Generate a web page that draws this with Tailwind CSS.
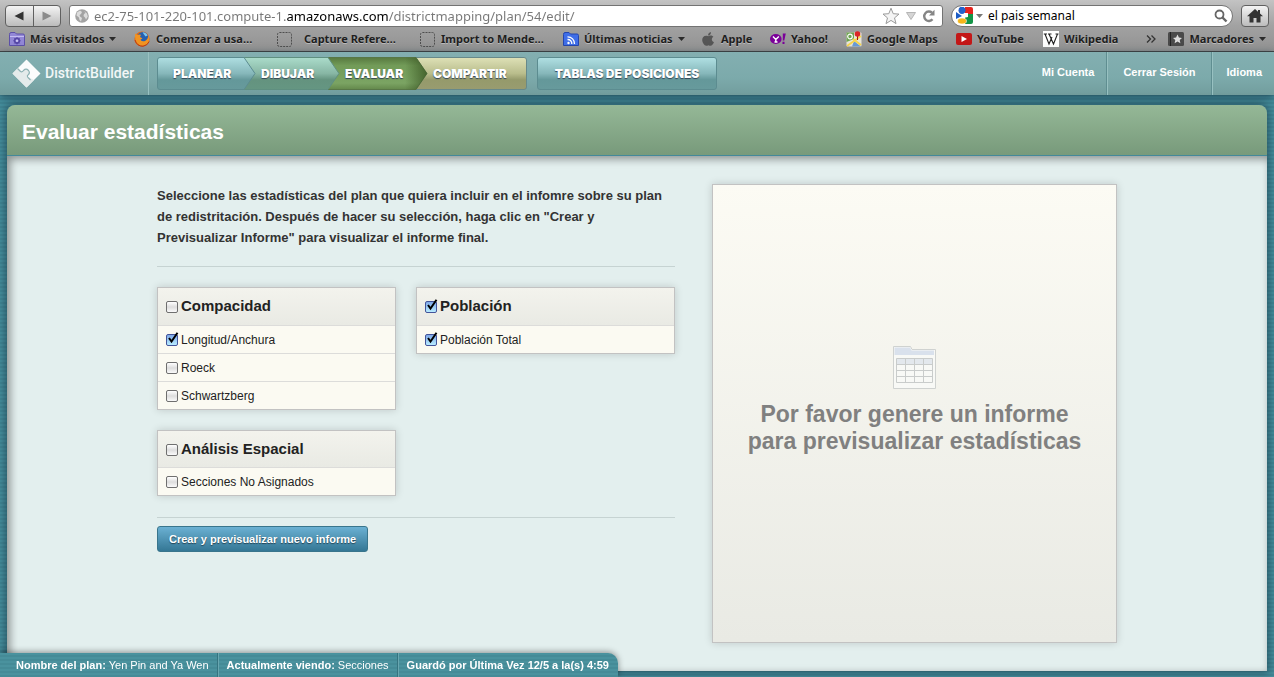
<!DOCTYPE html>
<html lang="es">
<head>
<meta charset="utf-8">
<meta name="viewport" content="width=device-width, initial-scale=1">
<title>DistrictBuilder</title>
<script src="https://cdn.jsdelivr.net/npm/@tailwindcss/browser@4"></script>
</head>
<body class="flex min-h-screen flex-col overflow-x-hidden bg-[#43899a] bg-[repeating-linear-gradient(#468f9d_0_2px,#418694_2px_4px)] font-['Liberation_Sans',Arial,sans-serif] text-[12px] text-[#222]">

<!-- Browser toolbar -->
<div class="border-b border-[#444] bg-linear-to-b from-[#c3c3c3] via-[#a2a2a2] via-50% to-[#929292] font-['Noto_Sans','Lucida_Grande',sans-serif]">
  <div class="flex h-[29px] items-center gap-2 px-[5px] pt-0.5">
    <div class="flex h-[22px] w-14 shrink-0 overflow-hidden rounded-[4px] border border-[#606060] bg-linear-to-b from-[#f4f4f4] to-[#bcbcbc]">
      <button aria-label="Atrás" class="flex flex-1 items-center justify-center border-r border-[#606060]"><svg width="10" height="10" viewBox="0 0 10 10"><path d="M9.500 0.500V9.500L0.500 5z" fill="#333"/></svg></button>
      <button aria-label="Adelante" class="flex flex-1 items-center justify-center"><svg width="10" height="10" viewBox="0 0 10 10"><path d="M.5.5V9.500L9.500 5z" fill="#8b8b8b"/></svg></button>
    </div>
    <div class="flex h-[22px] min-w-0 flex-1 items-center rounded-[3px] border border-[#737373] bg-white pr-1.5 pl-[5px]">
      <svg class="shrink-0" width="14" height="14" viewBox="0 0 14 14"><circle cx="7" cy="7" r="6.800" fill="#a3a3a3"/><path d="M2 3.500 5 1.500 7 3 6 5 4.500 6 5 7.500 7 9 6 12.500 4.500 11 4 8.500 1.500 6.500zM9 2 12 4.500 12.800 7.500 11 10.500 10 8.500 8.500 7 9 5 10.500 4z" fill="#dcdcdc"/></svg>
      <input aria-label="Dirección" value="ec2-75-101-220-101.compute-1.amazonaws.com/districtmapping/plan/54/edit/" class="ml-[5px] h-5 min-w-0 flex-1 bg-[linear-gradient(90deg,#777_192px,#000_192px_295px,#777_295px)] bg-clip-text text-[13px] text-transparent outline-none">
      <svg class="shrink-0" width="18" height="18" viewBox="0 0 18 18"><path d="M9 1.200 11.200 6.700 17 7.100 12.500 10.900 14 16.600 9 13.400 4 16.600 5.500 10.900 1 7.100 6.800 6.700z" fill="#f4f4f4" stroke="#9b9b9b"/></svg>
      <svg class="ml-1.5 shrink-0" width="10" height="8" viewBox="0 0 10 8"><path d="M.5.500H9.500L5 7.500z" fill="#d5d5d5" stroke="#b5b5b5"/></svg>
      <button aria-label="Recargar" class="ml-1.5"><svg width="14" height="14" viewBox="0 0 14 14"><path d="M10.500 10.300A4.700 4.700 0 1 1 10 3.700" fill="none" stroke="#858585" stroke-width="2.400"/><path d="M12.500.8V6.500H7z" fill="#858585"/></svg></button>
    </div>
    <div class="flex h-[22px] w-[282px] shrink-0 items-center rounded-full border border-[#737373] bg-white px-1">
      <svg class="shrink-0" width="17" height="17" viewBox="0 0 17 17"><path d="M9 0H15Q17 0 17 2V7H9z" fill="#e5231d"/><path d="M9 7H17V15Q17 17 15 17H9z" fill="#139547"/><path d="M0 5 6 9 0 12z" fill="#1c5cc4"/><ellipse cx="6" cy="3.300" rx="3.500" ry="3.600" fill="#2462cc"/><path d="M8 6 12 6 12 10 7 11z" fill="#fff"/><ellipse cx="6" cy="14" rx="4.500" ry="3" fill="#f5b61a" stroke="#fff" stroke-width=".6"/></svg>
      <svg class="ml-[3px] shrink-0" width="7" height="4" viewBox="0 0 7 4"><path d="M0 0H7L3.500 4z" fill="#777"/></svg>
      <input aria-label="Buscar" value="el pais semanal" class="ml-[5px] h-5 min-w-0 flex-1 text-[12px] text-black outline-none">
      <svg class="shrink-0" width="14" height="14" viewBox="0 0 14 14"><circle cx="5.500" cy="5.500" r="4" fill="none" stroke="#666" stroke-width="1.800"/><path d="M8.500 8.500 12.500 12.500" stroke="#666" stroke-width="2.400"/></svg>
    </div>
    <button aria-label="Inicio" class="flex h-[22px] w-7 shrink-0 items-center justify-center rounded-[4px] border border-[#606060] bg-linear-to-b from-[#f4f4f4] to-[#bcbcbc]"><svg width="16" height="14" viewBox="0 0 16 14"><path d="M8 0 11 2.700V1H13V4.500L16 7.300H13.500V13.500H9.500V9H6.500V13.500H2.500V7.300H0z" fill="#333"/></svg></button>
  </div>

  <nav aria-label="Marcadores" class="grid h-[22px] grid-cols-[125px_143px_143px_143px_139px_68px_76px_110px_87px_1fr_auto] items-center overflow-hidden pr-2 pb-0.5 pl-[9px] text-[11px] font-bold whitespace-nowrap text-[#1e1e1e] text-shadow-[0_1px_0_#bbb]">
    <a href="#" class="flex items-center gap-[5px]"><svg width="16" height="14" viewBox="0 0 16 14"><path d="M.5 2.500Q.5.500 2 .5H6L7.500 2H14Q15.500 2 15.500 3.500V13.500H.5z" fill="#9287d6" stroke="#5c50a8"/><path d="M1 4.500H15" stroke="#c5bdf2"/><circle cx="8" cy="8.800" r="2.300" fill="none" stroke="#5546a5" stroke-width="1.600"/><path d="M8 5V12.600M4.200 8.800H11.800M5.300 6.100 10.700 11.500M10.700 6.100 5.300 11.500" stroke="#5546a5" stroke-width=".9"/><circle cx="8" cy="8.800" r="1.300" fill="#c9c2f4"/></svg>Más visitados<svg width="7" height="4" viewBox="0 0 7 4"><path d="M0 0H7L3.500 4z" fill="#2a2a2a"/></svg></a>
    <a href="#" class="flex items-center gap-1.5"><svg width="16" height="16" viewBox="0 0 16 16"><circle cx="8" cy="8" r="7.600" fill="#e06a18"/><circle cx="8.800" cy="6.300" r="5.400" fill="#2560b0"/><path d="M8.500 1.200Q12 1.200 13.600 4.500L11.500 5.500 10 3.500z" fill="#7cc6f0"/><path d="M1.200 2.500 3.500 4Q5 3.200 7 3.800L6 6 8.500 7.200 6.500 8.800Q8 11 11 10 14 8.500 14.200 4.500 16.500 9.500 13 13 8 16.500 3.500 13 .2 9.500 1.200 2.500z" fill="#f29422"/><path d="M1 9Q3 15.300 9 15.300 13.500 14.500 15.200 10.500" fill="none" stroke="#bb3c14"/></svg>Comenzar a usa…</a>
    <a href="#" class="flex items-center gap-3"><svg width="15" height="15" viewBox="0 0 15 15"><rect x=".5" y=".5" width="14" height="14" rx="2" fill="none" stroke="#4e4e4e" stroke-dasharray="2 1"/></svg>Capture Refere…</a>
    <a href="#" class="flex items-center gap-1.5"><svg width="15" height="15" viewBox="0 0 15 15"><rect x=".5" y=".5" width="14" height="14" rx="2" fill="none" stroke="#4e4e4e" stroke-dasharray="2 1"/></svg>Import to Mende…</a>
    <a href="#" class="flex items-center gap-[5px]"><svg width="16" height="14" viewBox="0 0 16 14"><path d="M.5 2.500Q.5.500 2 .5H6L7.500 2H14Q15.500 2 15.500 3.500V13.500H.5z" fill="#3f6ee8" stroke="#2446ae"/><circle cx="5.500" cy="11" r="1.200" fill="#fff"/><path d="M4.500 7.500A4 4 0 0 1 8.800 12M4.500 4.800A6.800 6.800 0 0 1 11.500 12" stroke="#fff" stroke-width="1.300" fill="none"/></svg>Últimas noticias<svg width="7" height="4" viewBox="0 0 7 4"><path d="M0 0H7L3.500 4z" fill="#2a2a2a"/></svg></a>
    <a href="#" class="flex items-center gap-[7px]"><svg width="12" height="14" viewBox="0 0 12 14"><path d="M6.200 4.200C7 4 9.500 2.600 11.400 4.800 9 6.500 9.400 9.200 12 10 10.500 13.500 9.300 14.500 6.500 13.200 3.500 14.500 2.500 13.500.8 10.500-1 6.500 1.500 2.600 6.200 4.200zM6 3.500C6 1.500 7.500.3 9 0 9 2 8 3.400 6 3.500" fill="#565656"/></svg>Apple</a>
    <a href="#" class="flex items-center gap-[5px]"><svg width="16" height="12" viewBox="0 0 16 12"><ellipse cx="5.800" cy="6" rx="5.800" ry="5" fill="#7b0099"/><path d="M3 3.500 5.800 6.500V9M5.800 6.500 8.800 3.500M4.500 9H7.500" stroke="#fff" stroke-width="1.400" fill="none"/><path d="M12.800.5H15.800L14.300 7.500H12.800zM12.500 8.800H14.500V11H12.500z" fill="#7b0099"/></svg>Yahoo!</a>
    <a href="#" class="flex items-center gap-[5px]"><svg width="16" height="16" viewBox="0 0 16 16"><rect x=".5" y="1.500" width="15" height="14" rx="1" fill="#e9e5d8"/><path d="M.5 1.500H8V8L.5 11z" fill="#6ea552"/><path d="M8 10 15 15.500H6z" fill="#6a9bd6"/><path d="M1 15 15 5M7 8 15 14" stroke="#f7d54c" stroke-width="1.800"/><circle cx="4" cy="5.500" r="2.300" fill="none" stroke="#fff" stroke-width="1.200"/><path d="M11.500 9V4" stroke="#a01616"/><circle cx="11.500" cy="3" r="2.800" fill="#dc2626"/></svg>Google Maps</a>
    <a href="#" class="flex items-center gap-[5px]"><svg width="16" height="12" viewBox="0 0 16 12"><rect width="16" height="12" rx="2" fill="#c41717"/><path d="M5.500 3V9L11 6z" fill="#fff"/></svg>YouTube</a>
    <a href="#" class="flex items-center gap-[5px]"><svg width="16" height="16" viewBox="0 0 16 16"><rect width="16" height="16" fill="#fff"/><path d="M2 3 6 13 9 6M6 3 10.500 13 14.500 3M.8 3H4M5 3H8.500M12.500 3H15.500" fill="none" stroke="#222" stroke-width="1.100"/></svg>Wikipedia</a>
    <div class="flex items-center gap-3">
      <button aria-label="Más marcadores"><svg width="10" height="8" viewBox="0 0 10 8"><path d="M1 .5 4.500 4 1 7.500M5.500.5 9 4 5.500 7.500" stroke="#333" stroke-width="1.300" fill="none"/></svg></button>
      <a href="#" class="flex items-center gap-[5px]"><svg width="16" height="14" viewBox="0 0 16 14"><rect width="16" height="14" rx="1.500" fill="#4a4a4a"/><path d="M2.500 0V14" stroke="#222"/><path d="M9.500 2.500 10.900 5.600 14 5.900 11.700 8 12.400 11.200 9.500 9.600 6.600 11.200 7.300 8 5 5.900 8.100 5.600z" fill="#ddd"/></svg>Marcadores<svg width="7" height="4" viewBox="0 0 7 4"><path d="M0 0H7L3.500 4z" fill="#2a2a2a"/></svg></a>
    </div>
  </nav>
</div>

<!-- Application header -->
<header class="flex h-[43px] items-stretch bg-[linear-gradient(#83afb1,#7caaab_60%,#729d9d)] font-bold text-white shadow-[0_2px_8px_rgba(20,50,65,0.7)]">
  <a href="#" class="flex w-[149px] shrink-0 items-center gap-1 border-r border-[#98c1c1] pl-3 font-['Roboto','Liberation_Sans',sans-serif] text-[14px] font-medium whitespace-nowrap text-[#f2f7f7]">
    <svg class="shrink-0" width="29" height="29" viewBox="0 0 29 29" aria-hidden="true">
      <path d="M14.500.5 28.500 14.500 14.500 28.500.5 14.500z" fill="#fbfcfc"/>
      <path d="M6 9 9 12Q10.500 13.500 11.500 11.500 13.500 8.500 16.500 11 19 13.500 16.500 15.500 14.500 16.500 16 18L22 21 14.500 28.500.5 14.500z" fill="#e4ebeb"/>
      <path d="M5.500 9.500 8.500 12.500Q10 13.500 11.500 11.500 14 9 16.500 11.500 18.500 14 16 16 14.500 17 16.500 19L18.500 21" fill="none" stroke="#8fb3b5" stroke-width="1.200"/>
    </svg>
    DistrictBuilder
  </a>
  <nav aria-label="Secciones" class="flex shrink-0 items-center gap-[10px] pl-2 font-['Inter','Liberation_Sans',sans-serif] text-[12px] font-black text-shadow-[0_1px_1px_#345]">
    <div class="relative h-[33px]">
      <svg class="absolute inset-0" width="370" height="33" viewBox="0 0 370 33" aria-hidden="true">
        <defs>
          <linearGradient id="g1" x2="0" y2="1"><stop stop-color="#afdfe2"/><stop offset=".5" stop-color="#86b7ba"/><stop offset=".7" stop-color="#64989a"/><stop offset="1" stop-color="#679a9c"/></linearGradient>
          <linearGradient id="g2" x2="0" y2="1"><stop stop-color="#abdccb"/><stop offset=".5" stop-color="#87b6a4"/><stop offset=".7" stop-color="#64937f"/><stop offset="1" stop-color="#659682"/></linearGradient>
          <linearGradient id="g3" x2="0" y2="1"><stop stop-color="#57793f"/><stop offset=".25" stop-color="#729b58"/><stop offset=".8" stop-color="#7ba463"/><stop offset="1" stop-color="#64884c"/></linearGradient>
          <linearGradient id="g4" x2="0" y2="1"><stop stop-color="#dee1b7"/><stop offset=".5" stop-color="#b9bd8c"/><stop offset=".7" stop-color="#959a6b"/><stop offset="1" stop-color="#999c70"/></linearGradient>
          <linearGradient id="g5"><stop stop-color="#36521f" stop-opacity="0"/><stop offset="1" stop-color="#36521f" stop-opacity=".75"/></linearGradient>
        </defs>
        <path d="M250 .5H367Q369.500.5 369.500 3V30Q369.500 32.500 367 32.500H250z" fill="url(#g4)" stroke="#67898a"/>
        <path d="M160 .5H259L270 16.500 259 32.500H160z" fill="url(#g3)" stroke="#587747"/>
        <path d="M248 .5H259L270 16.500 259 32.500H248z" fill="url(#g5)"/>
        <path d="M80 .5H171L182 16.500 171 32.500H80z" fill="url(#g2)" stroke="#5f8f80"/>
        <path d="M87 .5 98 16.500 87 32.500H3Q.5 32.500.5 30V3Q.5.5 3 .5z" fill="url(#g1)" stroke="#5c8c90"/>
      </svg>
      <div class="relative flex h-full items-center">
        <a href="#" class="w-[88px] pl-4">PLANEAR</a>
        <a href="#" class="w-[84px] pl-4">DIBUJAR</a>
        <a href="#" aria-current="page" class="w-[88px] pl-4">EVALUAR</a>
        <a href="#" class="w-[110px] pl-4">COMPARTIR</a>
      </div>
    </div>
    <a href="#" class="flex h-[33px] w-[180px] items-center justify-center rounded-[3px] border border-[#5c8c90] bg-[linear-gradient(#afdfe2,#86b7ba_50%,#64989a_70%,#679a9c)]">TABLAS DE POSICIONES</a>
  </nav>
  <nav aria-label="Usuario" class="ml-auto flex text-[11px]">
    <a href="#" class="flex items-center border-r border-[#5f8e91] px-3 pb-0.5">Mi Cuenta</a>
    <a href="#" class="flex items-center border-r border-l border-r-[#5f8e91] border-l-[#98c1c1] px-[15px] pb-0.5">Cerrar Sesión</a>
    <a href="#" class="flex items-center border-l border-[#98c1c1] pr-3 pb-0.5 pl-[14px]">Idioma</a>
  </nav>
</header>

<!-- Evaluation panel -->
<main class="mx-[7px] mt-[10px] mb-1.5 flex flex-1 flex-col rounded-t-[8px] shadow-[0_0_8px_2px_rgba(20,50,65,0.6)]">
  <div class="flex h-[51px] items-center rounded-t-[8px] border-b border-[#44899a] bg-linear-to-b from-[#95b897] to-[#789a7b] px-[15px] pt-1">
    <h1 class="text-[21px] font-bold text-white">Evaluar estadísticas</h1>
  </div>
  <div class="flex-1 bg-[#e3efee] pt-7 pb-7 shadow-[inset_3px_3px_8px_rgba(0,0,0,0.4)]">
    <div class="mx-auto flex max-w-[960px] justify-between gap-9">
      <form class="max-w-[518px] flex-1">
        <p class="pt-px text-[13px] leading-[21px] font-bold text-[#333]">Seleccione las estadísticas del plan que quiera incluir en el infomre sobre su plan de redistritación. Después de hacer su selección, haga clic en "Crear y Previsualizar Informe" para visualizar el informe final.</p>
        <div class="mt-[18px] grid grid-cols-[239fr_259fr] items-start gap-5 border-y border-[#c6d3d2] pt-5 pb-[21px]">
          <fieldset class="border border-[#c2c2c2] bg-[#fbfaf2] shadow-[0_0_8px_rgba(0,0,0,0.16)]">
            <label class="flex h-[37px] items-center gap-[3px] bg-linear-to-b from-[#f3f3ed] to-[#e9eae4] px-2 text-[15px] font-bold"><input type="checkbox" class="size-3 appearance-none rounded-[2px] border border-[#6f6f6f] bg-[linear-gradient(#fff,#ddd_50%,#fafafa)]">Compacidad</label>
            <label class="flex h-7 items-center gap-[3px] border-t border-[#dcdcda] px-2"><span class="relative flex"><input type="checkbox" checked class="size-3 appearance-none rounded-[2px] border border-[#43549a] bg-linear-to-b from-[#7fa9e8] to-[#b8ecff]"><svg class="pointer-events-none absolute -top-0.5 left-0" width="13" height="13" viewBox="0 0 13 13"><path d="M3 6 5.500 9.500 11.500.8" fill="none" stroke="#000" stroke-width="2"/></svg></span>Longitud/Anchura</label>
            <label class="flex h-7 items-center gap-[3px] border-t border-[#dcdcda] px-2"><input type="checkbox" class="size-3 appearance-none rounded-[2px] border border-[#6f6f6f] bg-[linear-gradient(#fff,#ddd_50%,#fafafa)]">Roeck</label>
            <label class="flex h-7 items-center gap-[3px] border-t border-[#dcdcda] px-2"><input type="checkbox" class="size-3 appearance-none rounded-[2px] border border-[#6f6f6f] bg-[linear-gradient(#fff,#ddd_50%,#fafafa)]">Schwartzberg</label>
          </fieldset>
          <fieldset class="border border-[#c2c2c2] bg-[#fbfaf2] shadow-[0_0_8px_rgba(0,0,0,0.16)]">
            <label class="flex h-[37px] items-center gap-[3px] bg-linear-to-b from-[#f3f3ed] to-[#e9eae4] px-2 text-[15px] font-bold"><span class="relative flex"><input type="checkbox" checked class="size-3 appearance-none rounded-[2px] border border-[#43549a] bg-linear-to-b from-[#7fa9e8] to-[#b8ecff]"><svg class="pointer-events-none absolute -top-0.5 left-0" width="13" height="13" viewBox="0 0 13 13"><path d="M3 6 5.500 9.500 11.500.8" fill="none" stroke="#000" stroke-width="2"/></svg></span>Población</label>
            <label class="flex h-7 items-center gap-[3px] border-t border-[#dcdcda] px-2"><span class="relative flex"><input type="checkbox" checked class="size-3 appearance-none rounded-[2px] border border-[#43549a] bg-linear-to-b from-[#7fa9e8] to-[#b8ecff]"><svg class="pointer-events-none absolute -top-0.5 left-0" width="13" height="13" viewBox="0 0 13 13"><path d="M3 6 5.500 9.500 11.500.8" fill="none" stroke="#000" stroke-width="2"/></svg></span>Población Total</label>
          </fieldset>
          <fieldset class="border border-[#c2c2c2] bg-[#fbfaf2] shadow-[0_0_8px_rgba(0,0,0,0.16)]">
            <label class="flex h-9 items-center gap-[3px] bg-linear-to-b from-[#f3f3ed] to-[#e9eae4] px-2 text-[15px] font-bold"><input type="checkbox" class="mt-0.5 size-3 appearance-none rounded-[2px] border border-[#6f6f6f] bg-[linear-gradient(#fff,#ddd_50%,#fafafa)]">Análisis Espacial</label>
            <label class="flex h-7 items-center gap-[3px] border-t border-[#dcdcda] px-2"><input type="checkbox" class="size-3 appearance-none rounded-[2px] border border-[#6f6f6f] bg-[linear-gradient(#fff,#ddd_50%,#fafafa)]">Secciones No Asignados</label>
          </fieldset>
        </div>
        <button type="button" class="mt-2 h-[26px] rounded-[3px] border border-[#39758c] bg-linear-to-b from-[#6bb1d3] to-[#347795] px-[11px] text-[11px] font-bold text-white text-shadow-[0_1px_1px_#245]">Crear y previsualizar nuevo informe</button>
      </form>
      <section class="flex min-h-[459px] w-[405px] shrink-0 flex-col items-center border border-[#c2c2c2] bg-linear-to-b from-[#fcfbf4] to-[#e9eae4] pt-[161px] shadow-[0_0_8px_rgba(0,0,0,0.16)]">
        <svg width="43" height="43" viewBox="0 0 43 43" aria-hidden="true"><path d="M.5.5H17.500L19 3.500H42.500V42.500H.5z" fill="#f8f9f6" stroke="#cfd2d0"/><path d="M1.500 1.500H17L18.500 4.500H41V9H1.500z" fill="#d9e1ec"/><path d="M3.500 12.500H39.500V18.500H3.500z" fill="#e3e8ed"/><path d="M3.500 12.500H39.500V36.500H3.500zM3.500 18.500H39.500M3.500 24.500H39.500M3.500 30.500H39.500M12.500 12.500V36.500M21.500 12.500V36.500M30.500 12.500V36.500" fill="none" stroke="#c9cccb"/></svg>
        <h2 class="mt-3 text-center text-[23px] leading-[27px] font-bold text-[#808080]">Por favor genere un informe<br>para previsualizar estadísticas</h2>
      </section>
    </div>
  </div>
</main>

<!-- Plan status tab, pinned over the panel -->
<footer class="fixed bottom-0 left-0 flex h-6 items-stretch rounded-tr-[10px] bg-[#468c98] bg-[repeating-linear-gradient(#4a929e_0_2px,#458b97_2px_4px)] text-[11px] text-white shadow-[0_-1px_6px_rgba(0,0,0,0.4)]">
  <div class="flex items-center border-r border-[#357480] pr-2 pl-4"><span><b>Nombre del plan:</b> Yen Pin and Ya Wen</span></div>
  <div class="flex items-center border-r border-l border-r-[#357480] border-l-[#69a7b1] px-2"><span><b>Actualmente viendo:</b> Secciones</span></div>
  <div class="flex items-center border-l border-[#69a7b1] pr-[9px] pl-2"><b>Guardó por Última Vez 12/5 a la(s) 4:59</b></div>
</footer>
</body>
</html>
